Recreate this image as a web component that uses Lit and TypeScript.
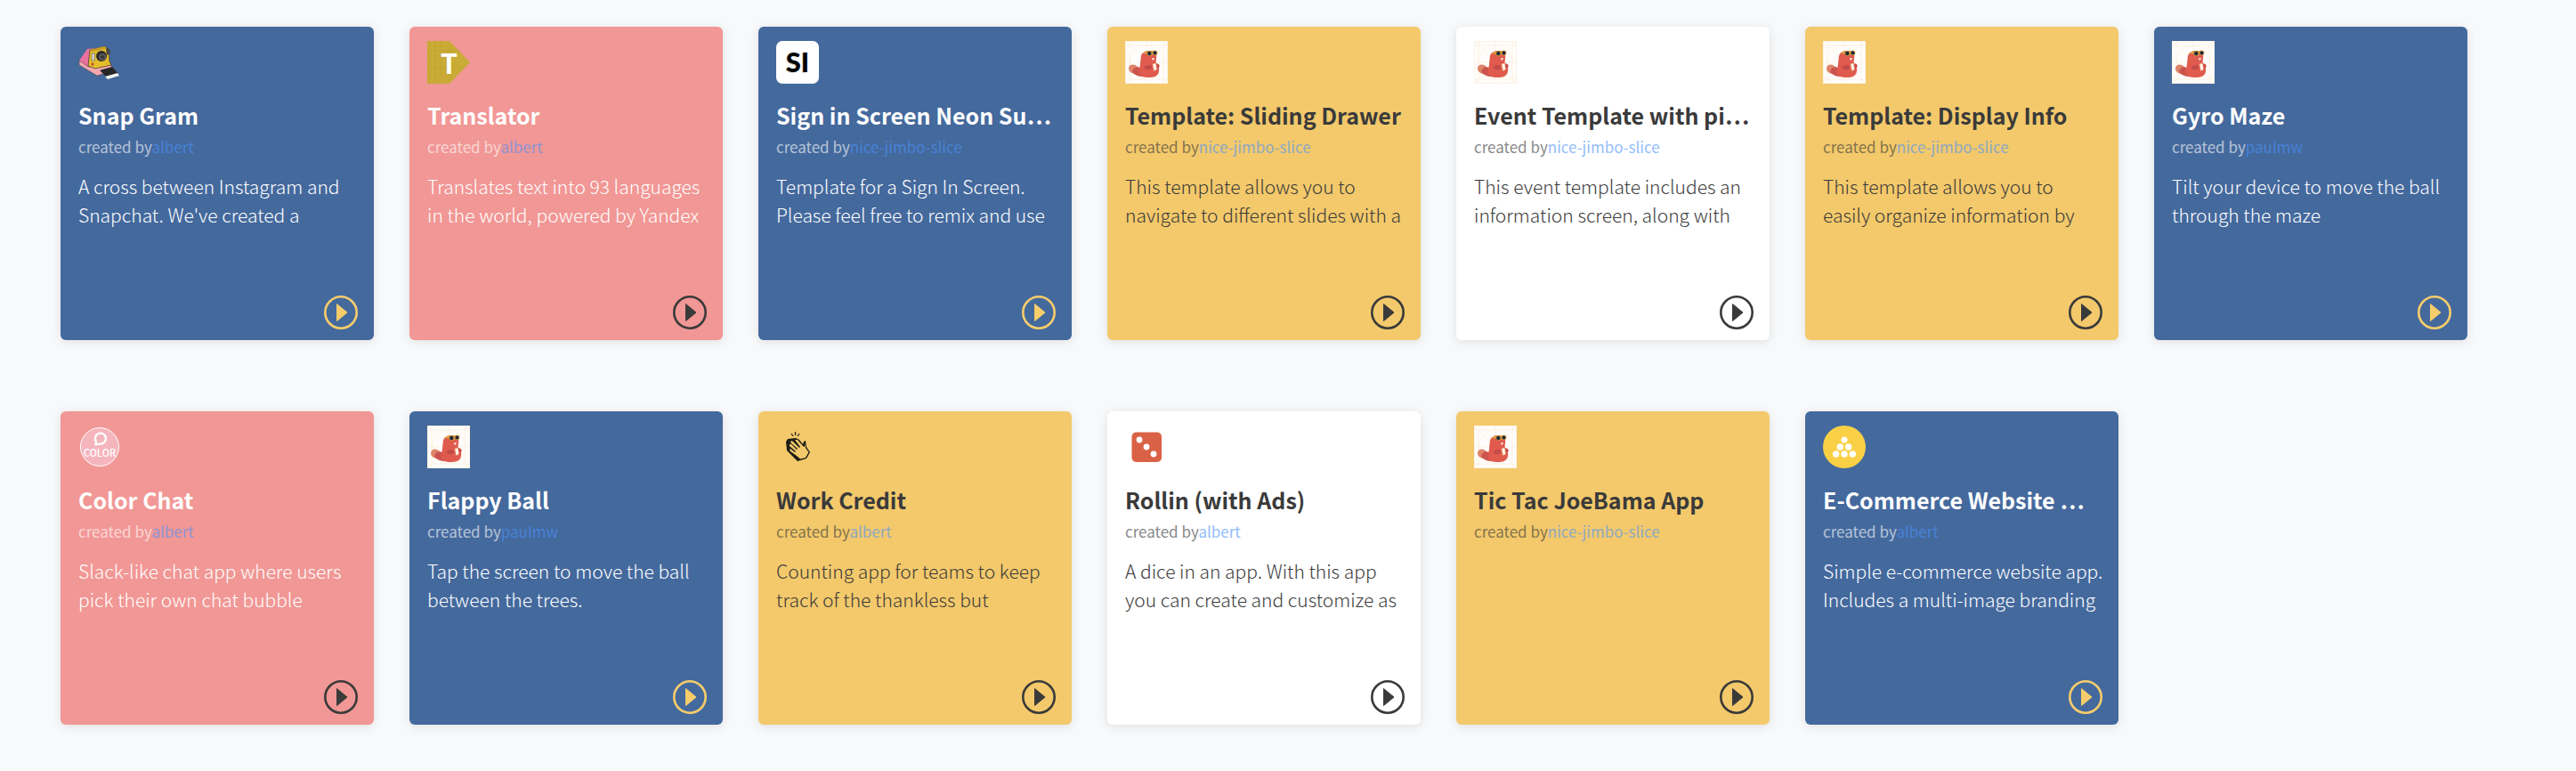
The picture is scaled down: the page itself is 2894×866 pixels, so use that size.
import { LitElement, html, svg, css, TemplateResult } from "lit";
import { customElement, property } from "lit/decorators.js";
import { classMap } from "lit/directives/class-map.js";

type Tone = "blue" | "pink" | "yellow" | "white";
interface App {
  name: string;
  author: string;
  text: string;
  tone: Tone;
  icon: string;
}

const APPS: App[] = [
  { name: "Snap Gram", author: "albert", text: "A cross between Instagram and Snapchat. We've created a", tone: "blue", icon: "camera" },
  { name: "Translator", author: "albert", text: "Translates text into 93 languages in the world, powered by Yandex", tone: "pink", icon: "tag" },
  { name: "Sign in Screen Neon Su…", author: "nice-jimbo-slice", text: "Template for a Sign In Screen. Please feel free to remix and use", tone: "blue", icon: "signin" },
  { name: "Template: Sliding Drawer", author: "nice-jimbo-slice", text: "This template allows you to navigate to different slides with a", tone: "yellow", icon: "beaver" },
  { name: "Event Template with pi…", author: "nice-jimbo-slice", text: "This event template includes an information screen, along with", tone: "white", icon: "beaver" },
  { name: "Template: Display Info", author: "nice-jimbo-slice", text: "This template allows you to easily organize information by", tone: "yellow", icon: "beaver" },
  { name: "Gyro Maze", author: "paulmw", text: "Tilt your device to move the ball through the maze", tone: "blue", icon: "beaver" },
  { name: "Color Chat", author: "albert", text: "Slack-like chat app where users pick their own chat bubble", tone: "pink", icon: "color" },
  { name: "Flappy Ball", author: "paulmw", text: "Tap the screen to move the ball between the trees.", tone: "blue", icon: "beaver" },
  { name: "Work Credit", author: "albert", text: "Counting app for teams to keep track of the thankless but", tone: "yellow", icon: "clap" },
  { name: "Rollin (with Ads)", author: "albert", text: "A dice in an app. With this app you can create and customize as", tone: "white", icon: "dice" },
  { name: "Tic Tac JoeBama App", author: "nice-jimbo-slice", text: "", tone: "yellow", icon: "beaver" },
  { name: "E-Commerce Website …", author: "albert", text: "Simple e-commerce website app. Includes a multi-image branding", tone: "blue", icon: "pyramid" },
];

const ICONS: Record<string, TemplateResult> = {
  camera: svg`
    <path d="M1 22L10 9L18 8L16 30L10 31Z" fill="#e8709f"/>
    <path d="M1 22L11 29L36 27L41 33L21 39L1 27Z" fill="#f3a9ae" stroke="#4a3540" stroke-width=".5"/>
    <path d="M13 10L30 6L34 10L35 23L37 27L19 31L11 28Z" fill="#e3bd2a" stroke="#3d3528" stroke-width=".7"/>
    <path d="M13 10L29 6L31 9L15 12Z" fill="#c59c2b"/>
    <path d="M31 8L35 9L36 14L32 16Z" fill="#454545"/>
    <rect x="15" y="14" width="3.500" height="8" fill="#d5cdca" stroke="#555" stroke-width=".5"/>
    <circle cx="26" cy="17" r="6" fill="#2b292b"/>
    <circle cx="27" cy="18" r="4" fill="#5a585b"/><circle cx="27" cy="18" r="2" fill="#343335"/>
    <circle cx="16" cy="26" r="1.500" fill="#c63a35"/>
    <path d="M24 33L38 29L45 37L32 41Z" fill="#272727"/>
    <path d="M30 40L44 36L46 39L33 43Z" fill="#f5f5f5"/>`,
  tag: svg`
    <path d="M0 0H25L48 24L25 48H0Z" fill="#c9ab35"/>
    <path d="M2 0V48M9 0V48M15 0V48M24 0V48M0 11H36M0 30H42" stroke="#b99a2f" stroke-width=".7" opacity=".5"/>
    <text class="tag-text" x="24.500" y="37" text-anchor="middle">T</text>`,
  signin: svg`
    <rect width="48" height="48" rx="7" fill="#fff"/>
    <text class="si-text si-shadow" x="23" y="36" text-anchor="middle">SI</text>
    <text class="si-text" x="24" y="34.500" text-anchor="middle">SI</text>`,
  beaver: svg`
    <rect width="48" height="48" fill="#fffdfb"/>
    <path d="M.5 .5H47.500V47.500H.5ZM0 5H48M0 43H48M5 0V48M43 0V48M0 24H48M24 0V48M0 0L48 48M48 0L0 48" fill="none" stroke="#fbf0df" stroke-width=".8"/>
    <circle cx="24" cy="24" r="19" fill="none" stroke="#fbf0df" stroke-width=".8"/>
    <path d="M4 31C4 26 10 25 14 29L18 36L14 38C8 37 4 35 4 31Z" fill="#de846b"/>
    <path d="M8 34C10 29 14 28 18 31L24 40C16 41 10 38 8 34Z" fill="#cb534d"/>
    <path d="M18 17C19 12 24 10.500 29 11C34 11 36 15 35 20C35 22 34 23 35 25C38 28 39 32 37.500 36C36 40 31 41.300 25 41C17 40.500 14 37 16 31C17.500 27 17 22 18 17Z" fill="#e05a4d"/>
    <path d="M35 25Q39.500 26 38.500 29L35 33Z" fill="#cf4946"/>
    <path d="M21.500 30Q25 25 30 28L30 31Q24 34 21.500 30Z" fill="#c14b49"/>
    <path d="M19 14L24 11.500L34 11L36 13L28 17L24 14.500Z" fill="#e0a23c"/>
    <circle cx="27.300" cy="14" r="2.700" fill="#1f2a3a" stroke="#e0a23c" stroke-width=".8"/>
    <circle cx="33.500" cy="13.400" r="2.500" fill="#1f2a3a" stroke="#e0a23c" stroke-width=".8"/>
    <path d="M30 19.500L33 19L32 21.500L30.500 21.500Z" fill="#fbeee9"/>
    <path d="M31 26L34.500 25L35.500 32L32.500 33.500Z" fill="#fff7e9" stroke="#e6b28a" stroke-width=".6"/>`,
  color: svg`
    <circle cx="24" cy="24" r="21.500" fill="#f5b5bd" stroke="#fff" stroke-width="1"/>
    <path d="M19.500 21.500L20 18A6 6 0 1 1 24 20.500Z" fill="none" stroke="#fff" stroke-width="2.300" stroke-linejoin="round"/>
    <text class="color-text" x="24" y="35" text-anchor="middle">COLOR</text>`,
  clap: svg`
    <path d="M11 18L13 15L22 14L26 16L30 21L31 18L33 17L34 24L38 30L34 37L24 40L12 28Z" fill="#1d1b16"/>
    <path d="M21 16L24 16L30 23L32 24L32.500 20L33 25L36.500 30L33 36L27 37.500L23 34L16 29L15 27L16 26L21 30L22 29L15 23L15 21L17 21L23 27L24 26L16 19L17 17L19 18L26 25L27 24Z" fill="#f3c96b"/>
    <path d="M17 9L19 12M21.500 7V11M26 9L24 12" stroke="#1d1b16" stroke-width="1.200"/>`,
  dice: svg`
    <rect x="7.500" y="7.500" width="33.500" height="33.500" rx="5" fill="#d96246"/>
    <circle cx="16" cy="16" r="3.400" fill="#fff"/><circle cx="24" cy="24" r="3.400" fill="#fff"/><circle cx="32" cy="32" r="3.400" fill="#fff"/>`,
  pyramid: svg`
    <circle cx="24" cy="24" r="24" fill="#f9d045"/>
    <g fill="#fff"><circle cx="24" cy="16" r="3.500"/><circle cx="19.300" cy="24" r="3.700"/><circle cx="28.700" cy="24" r="3.700"/>
    <circle cx="14.600" cy="32" r="3.700"/><circle cx="24" cy="32" r="3.700"/><circle cx="33.300" cy="32" r="3.700"/></g>`,
};

@customElement("app-card")
class AppCard extends LitElement {
  @property({ attribute: false }) app!: App;

  static styles = css`
    :host {
      display: block;
    }
    .card {
      box-sizing: border-box;
      display: flex;
      flex-direction: column;
      aspect-ratio: 1;
      padding: 16px 16px 12px 20px;
      border-radius: 6px;
      box-shadow: 0 2px 12px rgba(0, 0, 0, 0.1);
      color: #3a3a3a;
    }
    .blue {
      background: #44699d;
      color: #fff;
    }
    .pink {
      background: #f19795;
      color: #fff;
    }
    .yellow {
      background: #f3c96b;
    }
    .white {
      background: #fff;
    }
    .icon {
      display: block;
      width: 48px;
      height: 48px;
      flex: none;
    }
    .title {
      margin: 17px 0 0;
      font-size: 25px;
      font-weight: 700;
      line-height: 36px;
      white-space: nowrap;
    }
    .byline {
      margin: 2px 0 0;
      font-size: 17px;
      font-weight: 400;
      line-height: 32px;
      opacity: 0.6;
      white-space: nowrap;
    }
    .author {
      color: #4a93fa;
      text-decoration: none;
    }
    .text {
      margin: 12px 0 0;
      font-size: 21px;
      font-weight: 300;
      line-height: 32px;
    }
    .play {
      margin: auto 2px 0 auto;
      width: 38px;
      height: 38px;
      padding: 0;
      border: 0;
      background: none;
      color: #3a3a3a;
      cursor: pointer;
    }
    .blue .play {
      color: #f7cd6b;
    }
    .play-icon {
      display: block;
      width: 38px;
      height: 38px;
    }
    .tag-text {
      font: 700 31px "Noto Sans CJK KR", sans-serif;
      fill: #fff;
    }
    .si-text {
      font: 900 31px Lato, sans-serif;
      fill: #000;
    }
    .si-shadow {
      fill: #d9d9d9;
    }
    .color-text {
      font: 500 11px "Noto Sans CJK KR", sans-serif;
      fill: #fff;
    }
  `;

  render() {
    const { name, author, text, tone, icon } = this.app;
    return html`
      <article class=${classMap({ card: true, [tone]: true })}>
        <svg class="icon" viewBox="0 0 48 48" aria-hidden="true">${ICONS[icon]}</svg>
        <h2 class="title">${name}</h2>
        <p class="byline">created by<a class="author" href="#${author}">${author}</a></p>
        <p class="text">${text}</p>
        <button class="play" type="button" aria-label="Play ${name}">
          <svg class="play-icon" viewBox="0 0 38 38" aria-hidden="true">
            <circle cx="19" cy="19" r="17.700" fill="none" stroke="currentColor" stroke-width="2.600" />
            <path d="M14.500 9.500L26 19L14.500 28.500Z" fill="currentColor" stroke="currentColor" stroke-linejoin="round" />
          </svg>
        </button>
      </article>
    `;
  }
}

@customElement("app-root")
class AppRoot extends LitElement {
  static styles = css`
    :host {
      display: block;
      min-height: 100vh;
      box-sizing: border-box;
      padding: 30px 68px 52px;
      background: #f8f9fb;
      font-family: "Source Sans Pro", "Noto Sans CJK KR", sans-serif;
    }
    .grid {
      display: grid;
      grid-template-columns: repeat(auto-fill, 352px);
      gap: 80px 40px;
    }
  `;

  render() {
    return html`<main class="grid">${APPS.map((app) => html`<app-card .app=${app}></app-card>`)}</main>`;
  }
}
